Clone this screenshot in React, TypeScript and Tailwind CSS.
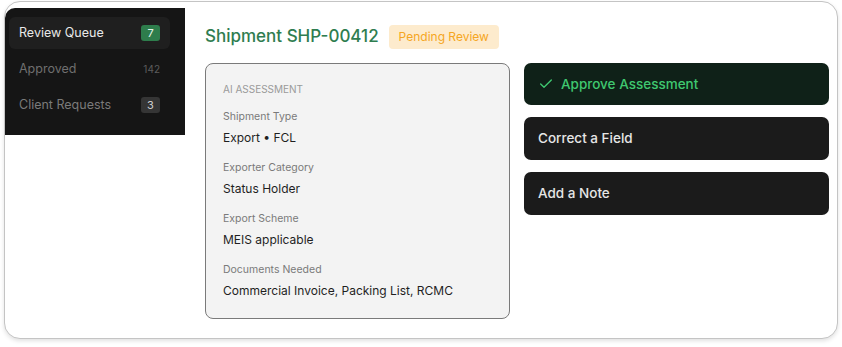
import React from "react";

const font = { fontFamily: "Inter, 'Noto Sans', sans-serif" };

function Row({ label, value }: { label: string; value: string }) {
  return (
    <div className="flex flex-col">
      <div className="text-[10.5px] leading-[14px] text-[#7a7a7a]">{label}</div>
      <div className="mt-[6px] text-[12px] leading-[16px] text-[#1f1f1f]">{value}</div>
    </div>
  );
}

export default function App() {
  return (
    <div className="w-[842px] h-[347px] bg-white" style={font}>
      <div className="ml-[4px] mt-[1px] w-[834px] h-[338px] rounded-[16px] border border-[#c4c4c4] bg-white shadow-[0_2px_4px_rgba(0,0,0,0.12)] overflow-hidden flex">
        {/* Sidebar */}
        <div className="mt-[6px] w-[180px] h-[127px] shrink-0 bg-[#151515] rounded-tl-[10px] pt-[9px] pl-[4px] pr-[15px] flex flex-col gap-[4px]">
          <div className="h-[32px] rounded-[6px] bg-[#1f1f1f] flex items-center justify-between pl-[10px] pr-[10px]">
            <span className="text-[12.5px] text-[#e8e8e8]">Review Queue</span>
            <span className="w-[19px] h-[16px] rounded-[3px] bg-[#2e7d4c] text-[11px] text-[#e8f5ec] flex items-center justify-center">7</span>
          </div>
          <div className="h-[32px] flex items-center justify-between pl-[10px] pr-[10px]">
            <span className="text-[12.5px] text-[#6f6f6f]">Approved</span>
            <span className="text-[10px] text-[#5c5c5c]">142</span>
          </div>
          <div className="h-[32px] flex items-center justify-between pl-[10px] pr-[10px]">
            <span className="text-[12.5px] text-[#7a7a7a]">Client Requests</span>
            <span className="w-[19px] h-[16px] rounded-[3px] bg-[#353535] text-[11px] text-[#d0d0d0] flex items-center justify-center">3</span>
          </div>
        </div>

        {/* Main */}
        <div className="ml-[20px] flex-1 pr-[8px] pt-[22px] flex flex-col">
          <div className="flex items-center h-[26px]">
            <span className="text-[17px] font-medium text-[#2f7d50]">Shipment SHP-00412</span>
            <span className="ml-[10px] h-[24px] px-[10px] rounded-[4px] bg-[#fdebcd] text-[12px] text-[#f5a623] flex items-center">Pending Review</span>
          </div>
          <div className="mt-[13px] flex gap-[14px]">
            <div className="w-[305px] h-[256px] rounded-[8px] border border-[#7a7a7a] bg-[#f3f3f3] pl-[17px] pt-[19px] flex flex-col">
              <div className="text-[10px] leading-[12px] text-[#9a9a9a]">AI ASSESSMENT</div>
              <div className="mt-[15px] flex flex-col gap-[15px]">
                <Row label="Shipment Type" value="Export • FCL" />
                <Row label="Exporter Category" value="Status Holder" />
                <Row label="Export Scheme" value="MEIS applicable" />
                <Row label="Documents Needed" value="Commercial Invoice, Packing List, RCMC" />
              </div>
            </div>
            <div className="w-[305px] flex flex-col gap-[12px]">
              <div className="h-[42px] rounded-[7px] bg-[#0f2118] flex items-center pl-[14px] gap-[7px]">
                <svg width="16" height="16" viewBox="0 0 24 24" fill="none" stroke="#3fc870" strokeWidth="2" strokeLinecap="round" strokeLinejoin="round">
                  <path d="M20 6 9 17l-5-5" />
                </svg>
                <span className="text-[13.5px] font-medium text-[#3fc870]">Approve Assessment</span>
              </div>
              <div className="h-[43px] rounded-[7px] bg-[#1b1b1b] flex items-center pl-[14px]">
                <span className="text-[13.5px] font-medium text-[#e6e6e6]">Correct a Field</span>
              </div>
              <div className="h-[43px] rounded-[7px] bg-[#1b1b1b] flex items-center pl-[14px]">
                <span className="text-[13.5px] font-medium text-[#e6e6e6]">Add a Note</span>
              </div>
            </div>
          </div>
        </div>
      </div>
    </div>
  );
}
